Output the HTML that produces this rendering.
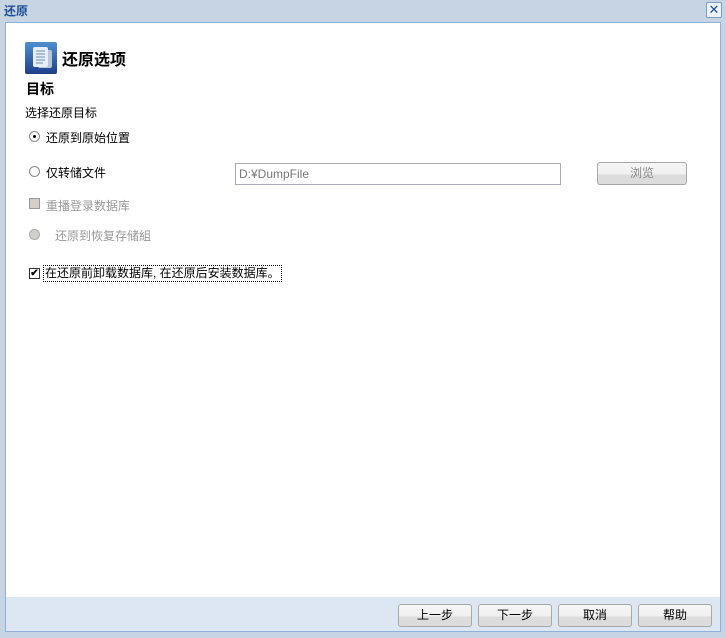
<!DOCTYPE html>
<html><head><meta charset="utf-8"><style>
*{margin:0;padding:0;box-sizing:border-box}
body{width:726px;height:638px;background:#c6d4e4;font-family:"Liberation Sans","Noto Sans CJK SC",sans-serif;font-size:12px;color:#000;position:relative;overflow:hidden}
.abs{position:absolute}
.title{left:4px;top:2px;font-weight:bold;color:#1d4f96;font-size:12px}
.close{left:706px;top:2px;width:16px;height:16px;border:1px solid #7d9cc3;background:#eef3fa;border-radius:2px;color:#1d4f96;font-size:13px;line-height:13px;text-align:center}
.panel{left:5px;top:22px;width:716px;height:576px;background:#fff;border:1px solid #8fb0d8;border-bottom:none}
.foot{left:5px;top:597px;width:716px;height:35px;background:#dde7f4;border:1px solid #8fb0d8;border-top:none}
.btn{height:23px;border:1px solid #a8a8a8;border-radius:3px;background:linear-gradient(#f6f6f6 0,#f0f0f0 55%,#dcdcdc 56%,#dcdcdc 100%);text-align:center;line-height:21px;font-size:12px;color:#000}
.radio{width:11px;height:11px;border:1px solid #888;border-radius:50%;background:#fff}
.gray{color:#999}
</style></head><body>
<div class="abs title">还原</div>
<div class="abs close">✕</div>
<div class="abs panel"></div>
<div class="abs foot"></div>
<svg class="abs" style="left:25px;top:42px" width="32" height="32" viewBox="0 0 32 32">
<defs><linearGradient id="g" x1="0" y1="0" x2="0" y2="1"><stop offset="0" stop-color="#4f8fd0"/><stop offset="1" stop-color="#1d3f8a"/></linearGradient></defs>
<rect width="32" height="32" rx="2" fill="url(#g)"/>
<rect x="13" y="8" width="14" height="18" rx="2" fill="#b8c6d8"/>
<rect x="8" y="5" width="15" height="20" rx="2" fill="#e8eef5"/>
<g stroke="#6d8fb8" stroke-width="1"><line x1="11" y1="9" x2="20" y2="9"/><line x1="11" y1="12" x2="20" y2="12"/><line x1="11" y1="15" x2="20" y2="15"/><line x1="11" y1="18" x2="20" y2="18"/><line x1="11" y1="21" x2="18" y2="21"/></g>
</svg>
<div class="abs" style="left:62px;top:46px;font-size:16px;font-weight:bold">还原选项</div>
<div class="abs" style="left:26px;top:79px;font-size:14px;font-weight:bold">目标</div>
<div class="abs" style="left:25px;top:104px">选择还原目标</div>
<div class="abs radio" style="left:29px;top:131px"><div style="width:3px;height:3px;background:#000;border-radius:50%;margin:3px"></div></div>
<div class="abs" style="left:46px;top:129px">还原到原始位置</div>
<div class="abs radio" style="left:29px;top:166px"></div>
<div class="abs" style="left:46px;top:164px">仅转储文件</div>
<div class="abs" style="left:235px;top:163px;width:326px;height:22px;border:1px solid #aab;color:#777;padding:3px 3px;font-size:12px">D:¥DumpFile</div>
<div class="abs btn" style="left:597px;top:162px;width:90px;color:#888">浏览</div>
<div class="abs" style="left:29px;top:198px;width:11px;height:11px;background:#d4d0c8;border:1px solid #999"></div>
<div class="abs gray" style="left:46px;top:197px">重播登录数据库</div>
<div class="abs radio" style="left:29px;top:229px;background:#d4d0c8;border-color:#aaa"></div>
<div class="abs gray" style="left:55px;top:227px">还原到恢复存储組</div>
<div class="abs" style="left:29px;top:268px;width:11px;height:11px;border:1px solid #333;background:#fff;font-size:10px;line-height:9px;text-align:center;font-weight:bold">✔</div>
<div class="abs" style="left:43px;top:265px;border:1px dotted #000;padding:0 1px;line-height:15px">在还原前卸载数据库, 在还原后安装数据库。</div>
<div class="abs btn" style="left:398px;top:604px;width:74px">上一步</div>
<div class="abs btn" style="left:478px;top:604px;width:74px">下一步</div>
<div class="abs btn" style="left:558px;top:604px;width:74px">取消</div>
<div class="abs btn" style="left:638px;top:604px;width:74px">帮助</div>
</body></html>
